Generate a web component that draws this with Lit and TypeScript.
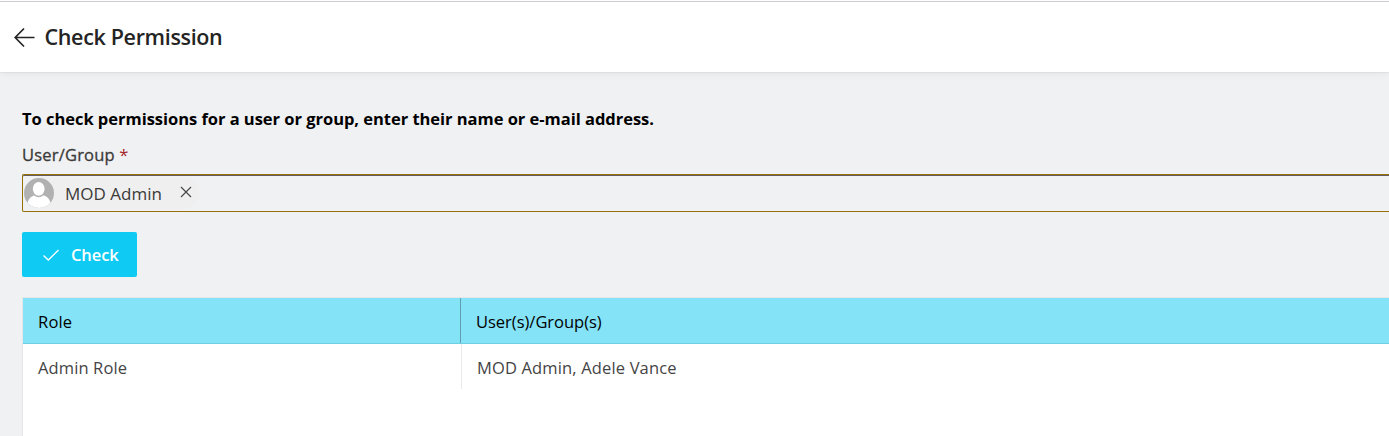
import { LitElement, html, css, svg } from "lit";
import { customElement } from "lit/decorators.js";

@customElement("app-root")
export class AppRoot extends LitElement {
  static styles = css`
    * { box-sizing: border-box; }
    :host {
      display: flex;
      flex-direction: column;
      width: 100%;
      height: 100vh;
      overflow: hidden;
      background: #f0f1f3;
      font-family: "Open Sans", "Noto Sans", sans-serif;
      white-space: nowrap;
    }
    svg { display: block; flex: none; }
    .strip { flex: none; height: 2px; background: #fff; border-bottom: 1px solid #cfcfd6; }
    .header {
      flex: none;
      height: 70px;
      padding: 0 0 0 14px;
      display: flex;
      align-items: center;
      background: #fff;
      box-shadow: 0 1px 1px rgba(0, 0, 0, 0.04), 0 2px 8px rgba(0, 0, 0, 0.05);
    }
    .title {
      margin: 0 0 0 9.5px;
      font-size: 21.5px;
      line-height: 30px;
      font-weight: 600;
      color: #242424;
      letter-spacing: -0.34px;
    }
    .content { flex: 1; display: flex; flex-direction: column; padding: 35px 0 0 22px; }
    .intro { font-size: 16.5px; line-height: 24px; font-weight: 700; color: #000; letter-spacing: -0.03px; }
    .label { margin-top: 12px; font-size: 16.5px; line-height: 24px; font-weight: 400; -webkit-text-stroke: 0.3px currentColor; color: #3b3a39; letter-spacing: 0.2px; }
    .required { color: #a4262c; -webkit-text-stroke: 0; }
    .picker {
      margin-top: 7px;
      height: 38px;
      display: flex;
      align-items: center;
      border: 1px solid #986f0b;
      border-right: 0;
      border-radius: 2px 0 0 2px;
      box-shadow: inset 0 1px 0 #605e5c;
      padding-left: 1px;
    }
    .persona {
      display: flex;
      align-items: center;
      height: 32px;
      width: 175px;
      border-radius: 16px;
      background: #efefef;
    }
    .name { margin-left: 11px; font-size: 17px; color: #3b3a39; width: 97px; letter-spacing: 0; }
    .remove { margin-left: 17.5px; position: relative; top: -1px; }
    .button {
      margin-top: 20px;
      width: 115px;
      height: 45px;
      border: 0;
      border-radius: 2px;
      background: #0fcaf3;
      color: #fff;
      display: flex;
      align-items: center;
      padding: 1px 0 0 20px;
      gap: 11px;
      font: 600 16.5px/24px "Open Sans", sans-serif;
      letter-spacing: -0.1px;
    }
    .table { flex: 1; margin-top: 20px; border: 1px solid #e6e6e8; border-right: 0; border-bottom: 0; background: #fff; }
    .row { display: grid; grid-template-columns: 438px 1fr; height: 46px; font-size: 16.5px; line-height: 24px; color: #444; }
    .row.head { background: #84e3f7; border-bottom: 1px solid #6fd0e3; color: #000; }
    .row.body { height: 45px; }
    .cell { display: flex; align-items: center; padding-left: 15px; padding-top: 2px; }
    .body .cell { padding-top: 3px; }
    .head .first { border-right: 1px solid #5f9fad; }
    .body .second { border-left: 1px solid #eaeaea; }
    .t-role { letter-spacing: 0.2px; }
    .t-users { letter-spacing: -0.02px; }
    .t-admin { letter-spacing: 0.12px; }
    .t-names { letter-spacing: 0.15px; }
  `;

  private backIcon = svg`<path d="M20.500 11.500H1.500M10 2.500L1.200 11.500L10 20.500" fill="none" stroke="#242424" stroke-width="1.7"/>`;

  render() {
    return html`
      <div class="strip"></div>
      <header class="header">
        <svg width="21" height="23" viewBox="0 0 21 23">${this.backIcon}</svg>
        <h1 class="title">Check Permission</h1>
      </header>
      <main class="content">
        <div class="intro"><span>To check permissions for a user or group, enter their name or e-mail address.</span></div>
        <div class="label"><span>User/Group</span> <span class="required">*</span></div>
        <div class="picker">
          <div class="persona">
            <svg width="30" height="30" viewBox="0 0 30 30">
              <defs><clipPath id="disc"><circle cx="15" cy="15" r="15"/></clipPath></defs>
              <g clip-path="url(#disc)">
                <rect width="30" height="30" fill="#b1b1b1"/>
                <path d="M3 31C3 20 7 17 15 17S27 20 27 31Z" fill="#fff"/>
                <ellipse cx="14.700" cy="11.300" rx="6.700" ry="8" fill="#b1b1b1"/>
                <ellipse cx="14.700" cy="10.800" rx="5.900" ry="6.900" fill="#fff"/>
              </g>
            </svg>
            <span class="name">MOD Admin</span>
            <svg class="remove" width="12" height="12" viewBox="0 0 12 12">
              <path d="M1 1L11 11M11 1L1 11" fill="none" stroke="#444" stroke-width="1.1"/>
            </svg>
          </div>
        </div>
        <button class="button">
          <svg width="18" height="14" viewBox="0 0 18 14">
            <path d="M1.500 7.500L6.300 12L16.500 2" fill="none" stroke="#fff" stroke-width="1.300"/>
          </svg>
          <span>Check</span>
        </button>
        <section class="table">
          <div class="row head">
            <div class="cell first"><span class="t-role">Role</span></div>
            <div class="cell second"><span class="t-users">User(s)/Group(s)</span></div>
          </div>
          <div class="row body">
            <div class="cell first"><span class="t-admin">Admin Role</span></div>
            <div class="cell second"><span class="t-names">MOD Admin, Adele Vance</span></div>
          </div>
        </section>
      </main>
    `;
  }
}
